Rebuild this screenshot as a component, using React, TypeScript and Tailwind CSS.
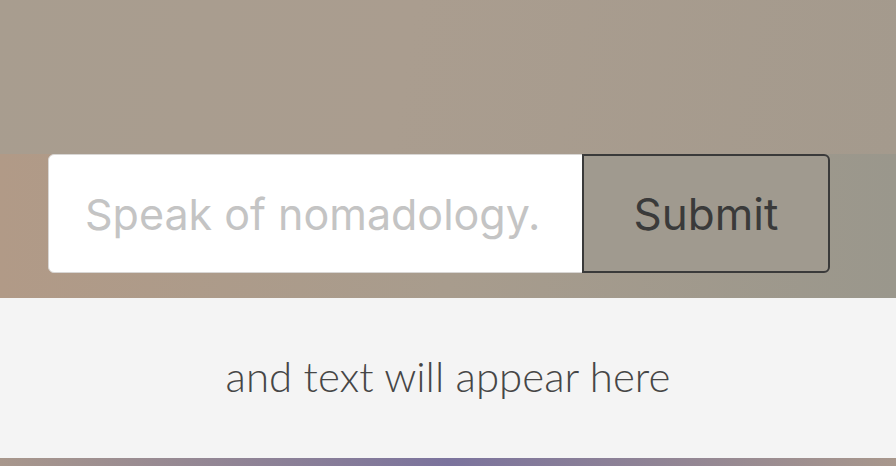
import React from "react";

export default function App() {
  return (
    <div className="w-[896px] h-[466px] overflow-hidden flex flex-col">
      <div className="h-[154px] bg-[linear-gradient(100deg,#a89d8f_0%,#aa9d8f_45%,#a49a8d_100%)]" />
      <div className="h-[144px] bg-[linear-gradient(90deg,#b19a87_0%,#a89c8d_50%,#9a978c_100%)] flex items-start pl-[48px]">
        <input
          type="text"
          placeholder="Speak of nomadology."
          className="w-[535px] h-[119px] bg-white border border-[#d8d6d4] rounded-l-[6px] pl-[36px] text-[43px] text-[#333] placeholder:text-[#c4c4c4] outline-none"
          style={{ fontFamily: "Inter, 'Noto Sans', sans-serif" }}
        />
        <button
          className="w-[248px] h-[119px] -ml-[1px] border-2 border-[#3a3a3a] rounded-r-[6px] bg-[#a09a8f] text-[44px] text-[#3a3a3a]"
          style={{ fontFamily: "Inter, 'Noto Sans', sans-serif" }}
        >
          Submit
        </button>
      </div>
      <div className="h-[160px] bg-[#f4f4f4] flex items-center justify-center">
        <p className="text-[42px] font-light text-[#464646] -mt-[4px]" style={{ fontFamily: "Lato, 'Noto Sans', sans-serif" }}>
          and text will appear here
        </p>
      </div>
      <div className="h-[8px] bg-[linear-gradient(90deg,#a8978c_0%,#7b739d_50%,#a8978c_100%)]" />
    </div>
  );
}
